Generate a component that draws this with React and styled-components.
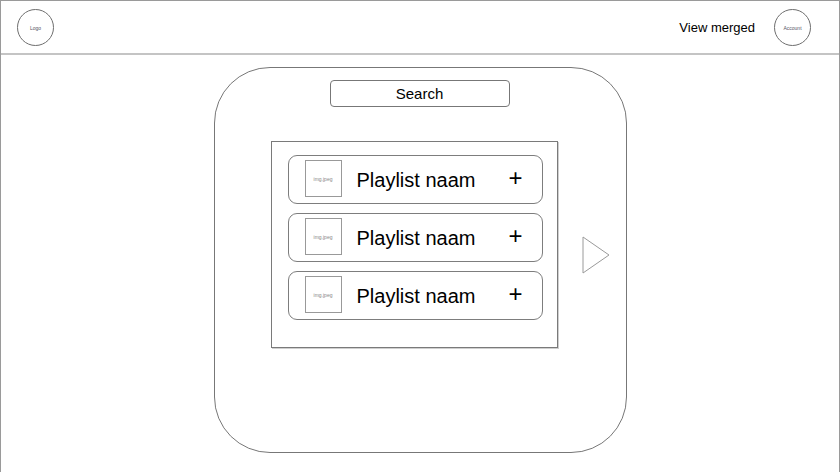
import React from "react";
import styled, { createGlobalStyle } from "styled-components";

const GlobalStyle = createGlobalStyle`
  html, body {
    margin: 0;
    padding: 0;
    background: #ffffff;
  }
  body {
    font-family: "Liberation Sans", Arial, sans-serif;
    color: #000;
  }
`;

const Frame = styled.div`
  box-sizing: border-box;
  width: 840px;
  height: 472px;
  border: 1px solid #9a9a9a;
  border-bottom: none;
  overflow: hidden;
`;

const Header = styled.header`
  box-sizing: border-box;
  height: 54px;
  display: flex;
  align-items: center;
  padding: 0 28px 0 16px;
  border-bottom: 2px solid #c4c4c4;
`;

const Circle = styled.div`
  box-sizing: border-box;
  width: 37px;
  height: 37px;
  border: 1px solid #6e6e6e;
  border-radius: 50%;
  display: flex;
  align-items: center;
  justify-content: center;
  font-size: 5px;
  color: #556;
  margin-top: 1px;
`;

const Spacer = styled.div`
  flex: 1;
`;

const HeaderLink = styled.span`
  font-size: 13px;
  margin-right: 19px;
`;

const Main = styled.main`
  display: flex;
  justify-content: center;
  padding-top: 12px;
`;

const Card = styled.section`
  box-sizing: border-box;
  width: 413px;
  height: 386px;
  border: 1px solid #777;
  border-radius: 56px;
  padding-top: 12px;
  display: flex;
  flex-direction: column;
  align-items: center;
`;

const SearchBox = styled.div`
  box-sizing: border-box;
  width: 180px;
  height: 27px;
  border: 1px solid #777;
  border-radius: 4px;
  display: flex;
  align-items: center;
  justify-content: center;
  font-size: 15px;
  margin-left: -1px;
`;

const Content = styled.div`
  align-self: stretch;
  display: flex;
  align-items: flex-start;
  padding-left: 56px;
  margin-top: 34px;
  gap: 24px;
`;

const ListBox = styled.div`
  box-sizing: border-box;
  width: 287px;
  height: 207px;
  border: 1px solid #7a7a7a;
  box-shadow: 1px 1px 0 #cfcfcf;
  padding: 13px 14px 0 16px;
  display: flex;
  flex-direction: column;
  gap: 9px;
`;

const Row = styled.div`
  box-sizing: border-box;
  height: 49px;
  border: 1px solid #7d7d7d;
  border-radius: 9px;
  display: flex;
  align-items: center;
  padding: 0 19px 0 16px;
`;

const Thumb = styled.div`
  box-sizing: border-box;
  width: 37px;
  height: 37px;
  border: 1px solid #999;
  display: flex;
  align-items: center;
  justify-content: center;
  font-size: 5px;
  color: #888;
  margin-top: -2px;
`;

const Name = styled.span`
  font-size: 20px;
  margin-left: 15px;
  flex: 1;
  margin-top: 1px;
`;

const Plus = styled.span`
  font-size: 24px;
  line-height: 1;
  margin-top: -3px;
`;

const NextArrow = styled.svg`
  margin-top: 95px;
  flex: none;
`;

const playlists = ["Playlist naam", "Playlist naam", "Playlist naam"];

export default function App() {
  return (
    <>
      <GlobalStyle />
      <Frame>
        <Header>
          <Circle>Logo</Circle>
          <Spacer />
          <HeaderLink>View merged</HeaderLink>
          <Circle>Account</Circle>
        </Header>
        <Main>
          <Card>
            <SearchBox>Search</SearchBox>
            <Content>
              <ListBox>
                {playlists.map((name, i) => (
                  <Row key={i}>
                    <Thumb>img.jpeg</Thumb>
                    <Name>{name}</Name>
                    <Plus>+</Plus>
                  </Row>
                ))}
              </ListBox>
              <NextArrow width="28" height="38" viewBox="0 0 28 38">
                <polygon
                  points="1,1 27,19 1,37"
                  fill="none"
                  stroke="#9a9a9a"
                  strokeWidth="1"
                />
              </NextArrow>
            </Content>
          </Card>
        </Main>
      </Frame>
    </>
  );
}
